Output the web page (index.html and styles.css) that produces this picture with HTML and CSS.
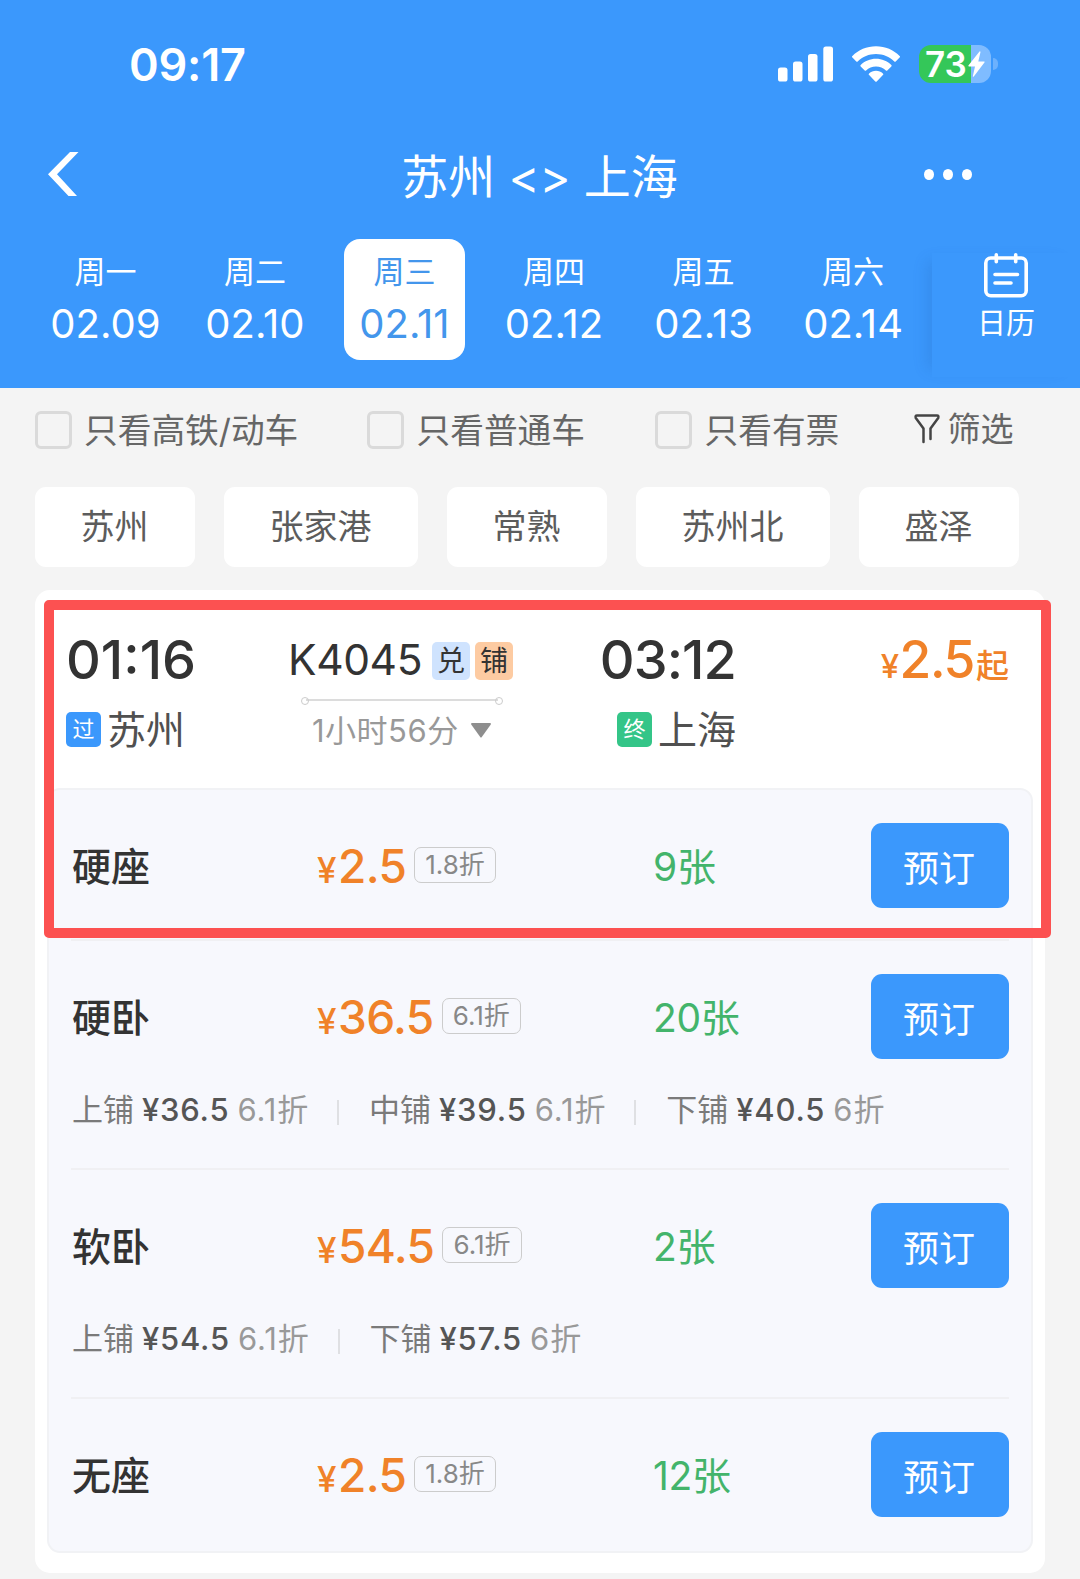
FILE: index.html
```html
<!DOCTYPE html>
<html lang="zh-CN">
<head>
    <meta charset="UTF-8">
    <meta name="viewport" content="width=device-width, initial-scale=1.0">
    <title>苏州 - 上海</title>
    <link rel="stylesheet" href="styles.css">
</head>
<body>
    <header class="header">
        <div class="status-bar">
            <span class="clock">09:17</span>
            <div class="status-icons">
                <svg class="signal" width="56" height="36" viewBox="0 0 56 36" fill="#fff">
                    <rect x="0" y="21.5" width="9.5" height="14" rx="2.6"/>
                    <rect x="15" y="15.5" width="9.5" height="20" rx="2.6"/>
                    <rect x="30" y="8" width="9.5" height="27.5" rx="2.6"/>
                    <rect x="45.3" y="0.5" width="9.7" height="35" rx="2.6"/>
                </svg>
                <svg class="wifi" width="48" height="36" viewBox="0 0 48 36" fill="#fff">
                    <path d="M24 0.3C14.7.3 6.3 4 .4 10a1 1 0 0 0 0 1.5l3.900 4a1 1 0 0 0 1.400 0C10.500 10.700 17 8 24 8s13.500 2.700 18.300 7.500a1 1 0 0 0 1.400 0l3.900-4a1 1 0 0 0 0-1.500C41.700 4 33.300.3 24 .3z"/>
                    <path d="M24 12.800c-5.900 0-11.300 2.300-15.300 6.100a1 1 0 0 0 0 1.500l4 4a1 1 0 0 0 1.400 0c2.600-2.400 6.100-3.900 9.900-3.900s7.300 1.500 9.900 3.900a1 1 0 0 0 1.400 0l4-4a1 1 0 0 0 0-1.500c-4-3.800-9.400-6.100-15.300-6.100z"/>
                    <path d="M24 24.800c-2.700 0-5.100 1-6.900 2.600a1 1 0 0 0 0 1.500l6.200 6.500a1 1 0 0 0 1.400 0l6.200-6.500a1 1 0 0 0 0-1.500c-1.800-1.600-4.200-2.600-6.900-2.600z"/>
                </svg>
                <div class="battery">
                    <span class="battery-level">73</span>
                    <svg class="bolt" width="17" height="26" viewBox="0 0 17 26" fill="#fff">
                        <path d="M11.500 0.500L.4 14.500q-.4.800.5.900H7L4.800 25.200q.2.800 1 .2L16.600 11.300q.4-.8-.5-.9H10.300L12.500.9q-.3-.9-1-.4z"/>
                    </svg>
                    <i class="battery-cap"></i>
                </div>
            </div>
        </div>

        <div class="nav">
            <svg class="back" width="31" height="44" viewBox="0 0 31 44" fill="#fff">
                <path d="M22 0H30.500L9 22.300L29 44H20.500L0 22.300z"/>
            </svg>
            <h1>苏州 &lt;&gt; 上海</h1>
            <div class="more"><i></i><i></i><i></i></div>
        </div>

        <div class="dates">
            <div class="day"><span>周一</span><b>02.09</b></div>
            <div class="day"><span>周二</span><b>02.10</b></div>
            <div class="day active"><span>周三</span><b>02.11</b></div>
            <div class="day"><span>周四</span><b>02.12</b></div>
            <div class="day"><span>周五</span><b>02.13</b></div>
            <div class="day"><span>周六</span><b>02.14</b></div>
            <div class="calendar">
                <svg width="44" height="45" viewBox="0 0 44 45" fill="none" stroke="#fff" stroke-width="3.600" stroke-linecap="round">
                    <rect x="1.800" y="5" width="40.400" height="37.800" rx="5"/>
                    <path d="M12.300 1.800v7M31.700 1.800v7M11 21.500h22.500M11 30h16"/>
                </svg>
                <span>日历</span>
            </div>
        </div>
    </header>

    <div class="filters">
        <label class="check c1"><i></i><span>只看高铁/动车</span></label>
        <label class="check c2"><i></i><span>只看普通车</span></label>
        <label class="check c3"><i></i><span>只看有票</span></label>
        <div class="filter-btn">
            <svg width="26" height="30" viewBox="0 0 26 30" fill="none" stroke="#444" stroke-width="2.500" stroke-linecap="round" stroke-linejoin="round">
                <path d="M9.500 28V14.500L1.800 4Q1 1.500 3 1.500H23Q25 1.500 24.200 4L16.500 14.500V25"/>
            </svg>
            <span>筛选</span>
        </div>
    </div>

    <div class="stations">
        <span class="s2">苏州</span>
        <span class="s3">张家港</span>
        <span class="s2">常熟</span>
        <span class="s3">苏州北</span>
        <span class="s2">盛泽</span>
    </div>

    <div class="card">
        <div class="train">
            <div class="depart">
                <div class="time">01:16</div>
                <div class="station"><i class="tag-pass">过</i>苏州</div>
            </div>
            <div class="trip">
                <div class="number">K4045<i class="tag-ex">兑</i><i class="tag-bed">铺</i></div>
                <div class="line"></div>
                <div class="duration">1小时56分
                    <svg width="20" height="15" viewBox="0 0 20 15" fill="#8e8e8e"><path d="M1 0h18q1.500.3.600 1.800L10.800 14q-.8 1-1.600 0L.4 1.800Q-.5.300 1 0z"/></svg>
                </div>
            </div>
            <div class="arrive">
                <div class="time">03:12</div>
                <div class="station"><i class="tag-end">终</i>上海</div>
            </div>
            <div class="from-price"><small>¥</small>2.5<em>起</em></div>
        </div>

        <div class="seats">
            <div class="seat">
                <div class="seat-main">
                    <span class="name">硬座</span>
                    <span class="price"><small>¥</small>2.5<i>1.8折</i></span>
                    <span class="left">9张</span>
                    <button>预订</button>
                </div>
            </div>
            <div class="seat">
                <div class="seat-main">
                    <span class="name">硬卧</span>
                    <span class="price"><small>¥</small>36.5<i>6.1折</i></span>
                    <span class="left">20张</span>
                    <button>预订</button>
                </div>
                <div class="berths">
                    <div><span>上铺</span><b>¥36.5</b><em>6.1折</em></div>
                    <div><span>中铺</span><b>¥39.5</b><em>6.1折</em></div>
                    <div><span>下铺</span><b>¥40.5</b><em>6折</em></div>
                </div>
            </div>
            <div class="seat">
                <div class="seat-main">
                    <span class="name">软卧</span>
                    <span class="price"><small>¥</small>54.5<i>6.1折</i></span>
                    <span class="left">2张</span>
                    <button>预订</button>
                </div>
                <div class="berths">
                    <div><span>上铺</span><b>¥54.5</b><em>6.1折</em></div>
                    <div><span>下铺</span><b>¥57.5</b><em>6折</em></div>
                </div>
            </div>
            <div class="seat">
                <div class="seat-main">
                    <span class="name">无座</span>
                    <span class="price"><small>¥</small>2.5<i>1.8折</i></span>
                    <span class="left">12张</span>
                    <button>预订</button>
                </div>
            </div>
        </div>

        <div class="highlight"></div>
    </div>
</body>
</html>
```
FILE: styles.css
```css
* {
    box-sizing: border-box;
}

body {
    width: 1080px;
    height: 1579px;
    margin: 0;
    overflow: hidden;
    background-color: #f4f4f4;
    color: #333;
    font-family: Inter, "Noto Sans CJK SC", sans-serif;
    line-height: 1;
    white-space: nowrap;
}

i, em {
    font-style: normal;
}

svg {
    display: block;
    flex: none;
}

/* header */
.header {
    height: 388px;
    background-color: #3b98fc;
    color: #fff;
}

.status-bar {
    display: flex;
    align-items: center;
    justify-content: space-between;
    height: 128px;
    padding: 0 82px 0 129px;
}

.clock {
    padding-top: 1px;
    font-size: 45px;
    font-weight: 600;
    letter-spacing: -0.2px;
}

.status-icons {
    display: flex;
    align-items: center;
}

.wifi {
    margin: 0 19px 0 18px;
}

.battery {
    display: flex;
    align-items: center;
    position: relative;
    width: 72px;
    height: 38px;
    margin-right: 7px;
    padding-left: 6px;
    border-radius: 12px;
    background: linear-gradient(to right, #34c759 52px, #7fbcff 52px);
}

.battery-level {
    width: 43px;
    font-size: 35px;
    font-weight: 600;
    letter-spacing: -0.2px;
}

.bolt {
    margin-left: 0;
}

.battery-cap {
    position: absolute;
    right: -7px;
    top: 13px;
    width: 5px;
    height: 12px;
    border-radius: 0 6px 6px 0;
    background-color: #6db1fd;
}

.nav {
    display: flex;
    align-items: center;
    justify-content: space-between;
    height: 92px;
    padding: 0 108px 0 48px;
}

h1 {
    margin: 0 0 0 76px;
    padding-top: 5px;
    font-size: 47px;
    font-weight: 400;
}

.more {
    display: flex;
    gap: 9px;
}

.more i {
    width: 10px;
    height: 11px;
    border-radius: 50%;
    background-color: #fff;
}

.dates {
    display: flex;
    align-items: flex-start;
    padding: 19px 0 0 45px;
    gap: 28.700px;
}

.day {
    display: flex;
    flex-direction: column;
    align-items: center;
    width: 121px;
    height: 121px;
    padding-top: 17px;
    border-radius: 16px;
}

.day span {
    font-size: 31px;
}

.day b {
    margin-top: 17px;
    font-size: 40px;
    font-weight: 400;
}

.day.active {
    background-color: #fff;
    color: #4396ec;
}

.calendar {
    display: flex;
    flex-direction: column;
    align-items: center;
    width: 148px;
    height: 124px;
    margin: 14px 0 0 -10px;
    box-shadow: -12px 0 14px -8px rgba(30, 90, 170, 0.2);
}

.calendar span {
    margin-top: 11px;
    font-size: 29px;
}

/* filters */
.filters {
    display: flex;
    align-items: center;
    height: 83px;
    padding-left: 34.500px;
    color: #666;
    font-size: 33.700px;
}

.check {
    display: flex;
    align-items: center;
}

.check i {
    width: 37px;
    height: 38px;
    margin-right: 12.500px;
    border: 3px solid #dadada;
    border-radius: 6px;
}

.check span {
    padding-top: 2px;
}

.c1 {
    width: 332.500px;
}

.c2 {
    width: 288px;
}

.c3 {
    width: 258.500px;
}

.filter-btn {
    display: flex;
    align-items: center;
    gap: 8px;
    margin-top: -2px;
    font-size: 33px;
}

.filter-btn span {
    padding-top: 2px;
}

.stations {
    display: flex;
    gap: 29px;
    padding: 16px 0 0 34.500px;
}

.stations span {
    height: 80px;
    border-radius: 11px;
    background-color: #fff;
    color: #5c5c5c;
    font-size: 34px;
    line-height: 80px;
    text-align: center;
}

.s2 {
    width: 160px;
}

.s3 {
    width: 194px;
}

/* train card */
.card {
    position: relative;
    width: 1010px;
    height: 983px;
    margin: 23px 0 0 35px;
    padding: 0 12px;
    border-radius: 15px;
    background-color: #fff;
}

.train {
    display: flex;
    height: 198px;
    padding: 43px 24px 0 19px;
}

.time {
    font-size: 54px;
    font-weight: 450;
    letter-spacing: -0.9px;
}

.station {
    display: flex;
    align-items: center;
    margin-top: 22px;
    color: #505050;
    font-size: 39px;
    line-height: 42px;
}

.station i {
    width: 35px;
    height: 35px;
    margin: -2px 6px 0 0;
    border-radius: 5px;
    color: #fff;
    font-size: 22px;
    line-height: 34px;
    text-align: center;
}

.tag-pass {
    background-color: #3b98fc;
}

.tag-end {
    background-color: #34c588;
}

.depart {
    width: 222px;
}

.depart .time {
    letter-spacing: 0;
}

.trip {
    width: 300px;
}

.number {
    display: flex;
    align-items: center;
    height: 54px;
    font-size: 42.500px;
    font-weight: 400;
    letter-spacing: -0.4px;
}

.number i {
    width: 38px;
    height: 38px;
    margin: 2px 0 0 5px;
    border-radius: 5px;
    font-size: 28px;
    letter-spacing: 0;
    line-height: 39px;
    text-align: center;
}

.number .tag-ex {
    margin-left: 10px;
    background-color: #cfe3fe;
}

.number .tag-bed {
    background-color: #fdcba2;
}

.line {
    position: relative;
    width: 192px;
    height: 2px;
    margin: 12px 0 0 18px;
    background-color: #dcdcdc;
}

.line::before,
.line::after {
    content: "";
    position: absolute;
    top: -2px;
    left: -5px;
    width: 6px;
    height: 6px;
    border: 1.500px solid #ccc;
    border-radius: 50%;
}

.line::after {
    left: auto;
    right: -5px;
}

.duration {
    display: flex;
    align-items: center;
    gap: 12px;
    margin: 14px 0 0 24px;
    color: #999;
    font-size: 31px;
    letter-spacing: 0.5px;
}

.arrive {
    display: flex;
    flex-direction: column;
    align-items: flex-end;
    width: 148px;
}

.from-price {
    flex: 1;
    padding-top: 1px;
    color: #f08229;
    font-size: 51.500px;
    font-weight: 450;
    letter-spacing: -1.400px;
    text-align: right;
}

.from-price small {
    margin-right: 2px;
    font-size: 33px;
}

.from-price em {
    margin-left: 2px;
    font-size: 33px;
    letter-spacing: 0;
}

/* seat list */
.seats {
    height: 765px;
    padding: 0 22px;
    border: 2px solid #f1f2f5;
    border-radius: 13px;
    background-color: #f7f8fd;
}

.seat {
    height: 229px;
    padding-top: 33px;
    border-bottom: 2px solid #f0f0f3;
}

.seat:first-child {
    height: 151px;
}

.seat:last-child {
    border: none;
}

.seat-main {
    display: grid;
    grid-template-columns: 245px 337px 1fr 138px;
    align-items: center;
    height: 85px;
}

.name {
    padding: 2px 0 0 1px;
    font-size: 39px;
    font-weight: 500;
}

.price {
    display: flex;
    align-items: baseline;
    padding-left: 1px;
    color: #f08229;
    font-size: 46px;
    font-weight: 500;
    letter-spacing: -0.6px;
}

.price small {
    margin-right: 2px;
    font-size: 35px;
}

.price i {
    align-self: center;
    height: 36px;
    margin: -1px 0 0 8px;
    padding: 0 10px;
    border: 1.500px solid #ccc;
    border-radius: 7px;
    color: #888;
    font-size: 26px;
    font-weight: 400;
    letter-spacing: 0;
    line-height: 33px;
}

.left {
    padding-top: 2px;
    color: #43b46b;
    font-size: 39px;
    letter-spacing: -0.3px;
}

button {
    height: 85px;
    padding: 0 2px 0 0;
    border: none;
    border-radius: 11px;
    background-color: #3b98fc;
    color: #fff;
    font-family: inherit;
    font-size: 36px;
}

.berths {
    display: flex;
    align-items: center;
    margin-top: 35px;
    padding-left: 1px;
    font-size: 31px;
}

.berths div {
    display: flex;
}

.berths div + div::before {
    content: "";
    width: 2px;
    height: 25px;
    margin: 6px 30px 0 28px;
    background-color: #dfe0e3;
}

.berths span {
    color: #7a7a7a;
}

.berths b {
    margin: 0 8px;
    color: #555;
    font-weight: 550;
    letter-spacing: 0.8px;
}

.berths em {
    color: #999;
    letter-spacing: 0.9px;
}

/* red marker frame over the first offer */
.highlight {
    position: absolute;
    left: 9px;
    top: 10px;
    width: 1007px;
    height: 338px;
    border: 10px solid #fc5151;
    border-radius: 5px;
}
```
